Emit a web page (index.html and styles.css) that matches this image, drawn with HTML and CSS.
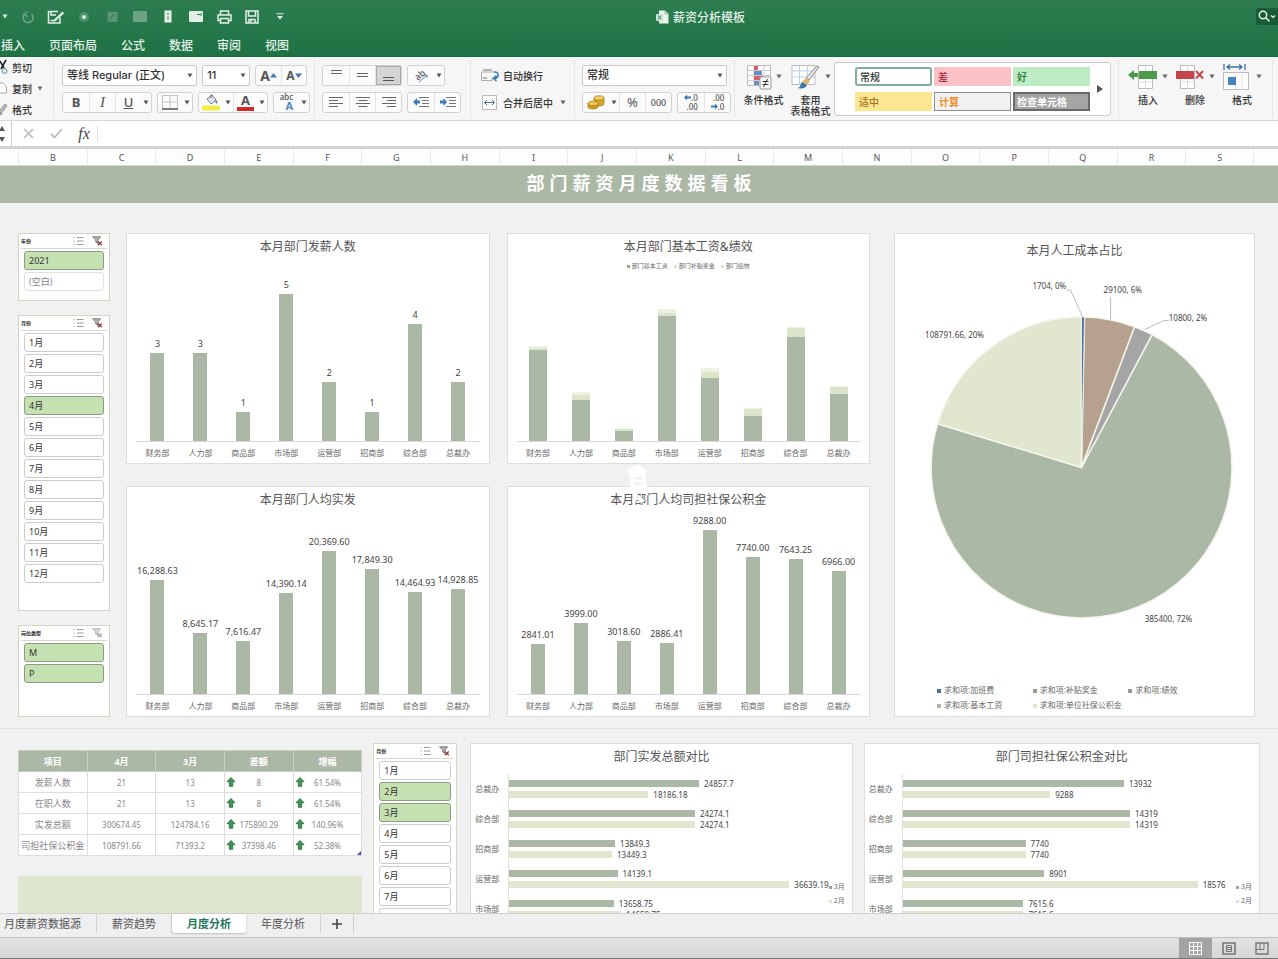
FILE: index.html
```html
<!DOCTYPE html>
<html lang="zh-CN">
<head>
<meta charset="utf-8">
<title>薪资分析模板</title>
<link rel="stylesheet" href="styles.css">
</head>
<body>
<svg class="defs" aria-hidden="true">
  <symbol id="caret" viewBox="0 0 6 5"><path d="M.5 .5h5L3 4.5z" fill="currentColor"/></symbol>
  <symbol id="multi" viewBox="0 0 11 10"><g fill="none" stroke="#999" stroke-width="1"><path d="M4 1.5h6.500M4 5h6.500M4 8.500h6.500"/><path d="M.5 1.500h1.500M.5 5h1.500M.5 8.500h1.500" stroke="#bbb"/></g></symbol>
  <symbol id="clear" viewBox="0 0 11 10"><path d="M.5 .8h8L6 4v3.500L3.800 6V4z" fill="#b9b0ae" stroke="#777" stroke-width=".9"/><path d="M5.800 5.500l4 3.800m0-3.800l-4 3.800" stroke="#8d3f3a" stroke-width="1.400"/></symbol>
  <symbol id="clear-off" viewBox="0 0 11 10"><path d="M.5 .8h8L6 4v3.500L3.800 6V4z" fill="#ddd" stroke="#aaa" stroke-width=".9"/><path d="M5.800 5.500l4 3.800m0-3.800l-4 3.800" stroke="#aaa" stroke-width="1.200"/></symbol>
  <symbol id="up" viewBox="0 0 10 10"><path d="M5 .5l4 4.200H6.700V9.300H3.300V4.700H1z" fill="#3f9457" stroke="#23693a" stroke-width=".8"/></symbol>
</svg>
<header class="titlebar">
  <div class="top-row">
    <div class="qat">
      <button class="qat-caret" aria-label="更多"><svg width="6" height="5"><use href="#caret"/></svg></button>
      <button class="dim" aria-label="重做"><svg width="14" height="14" viewBox="0 0 14 14" fill="none" stroke="currentColor" stroke-width="1.600"><path d="M3.500 4.200A5 5 0 1 0 10.500 4"/><path d="M6.500 1.500L3 4.500l3.800 2"/></svg></button>
      <button aria-label="编辑"><svg width="18" height="14" viewBox="0 0 18 14" fill="none" stroke="currentColor" stroke-width="1.500"><path d="M13 7.500V13H1.500V1.500H11M4 1.500V5h5"/><path d="M3.500 10.500h4"/><path d="M7.500 9.500L15.500 2l1.200 1.300-8 7.300-2 .6z" fill="currentColor" stroke-width=".8"/></svg></button>
      <button class="dim" aria-label="录制"><svg width="12" height="12" viewBox="0 0 12 12"><circle cx="6" cy="6" r="5" fill="currentColor" opacity=".6"/><circle cx="6" cy="6" r="2" fill="#dff0e4"/></svg></button>
      <button class="dim" aria-label="形状"><svg width="11" height="12" viewBox="0 0 11 12"><rect x=".5" y="1" width="10" height="10" rx="1" fill="currentColor" opacity=".7"/><path d="M3 8l4-5" stroke="#2b7a4e"/></svg></button>
      <button class="dim" aria-label="图片"><svg width="14" height="12" viewBox="0 0 14 12"><rect width="14" height="11" rx="1" fill="currentColor"/></svg></button>
      <button aria-label="纵向"><svg width="8" height="13" viewBox="0 0 8 13"><rect x=".5" y=".5" width="7" height="12" fill="currentColor"/><path d="M4 3v2M4 6.500v3" stroke="#2b7a4e"/></svg></button>
      <button aria-label="横向"><svg width="14" height="11" viewBox="0 0 14 11"><rect width="14" height="11" rx="1" fill="currentColor"/><path d="M8 3.500h3M12 2v3" stroke="#2b7a4e"/></svg></button>
      <button aria-label="打印"><svg width="15" height="14" viewBox="0 0 15 14" fill="none" stroke="currentColor" stroke-width="1.500"><path d="M3.500 5V1h8v4M3 10.500H1V5h13v5.500h-2"/><path d="M3.500 8.500h8V13h-8z"/></svg></button>
      <button aria-label="保存"><svg width="14" height="14" viewBox="0 0 14 14" fill="none" stroke="currentColor" stroke-width="1.500"><path d="M1 1h12v12H1z"/><path d="M3.500 1v5h7V1"/><path d="M4 13V9.500h6V13M6 10v2"/></svg></button>
      <button aria-label="自定义"><svg width="8" height="7" viewBox="0 0 8 7"><path d="M.5 .8h7" stroke="currentColor"/><path d="M1 3h6L4 6.500z" fill="currentColor"/></svg></button>
    </div>
    <div class="doc-title">
      <svg width="13" height="14" viewBox="0 0 13 14"><path d="M3 .5h6L12.500 4v9.500H3z" fill="#e8f3eb"/><path d="M9 .5V4h3.500" fill="none" stroke="#8fb79e"/><rect y="4" width="7" height="7" rx="1" fill="#cfe3d6"/><path d="M2 5.500l3 4M5 5.500l-3 4" stroke="#3b8059"/></svg>
      <span>薪资分析模板</span>
    </div>
    <button class="search" aria-label="搜索"><svg width="18" height="13" viewBox="0 0 18 13" fill="none" stroke="currentColor" stroke-width="1.500"><circle cx="5" cy="5" r="3.700"/><path d="M7.800 7.800l3.700 3.700"/><path d="M13 5.500l2 2 2-2" stroke-width="1.200"/></svg></button>
  </div>
  <nav class="menu">
    <a href="#">插入</a><a href="#">页面布局</a><a href="#">公式</a><a href="#">数据</a><a href="#">审阅</a><a href="#">视图</a>
  </nav>
</header>

<section class="ribbon">
  <div class="group clipboard">
    <button><svg width="8" height="15" viewBox="0 0 8 15"><path d="M6 0L1 9M0 1l4 7" stroke="#222" stroke-width="1.600"/><circle cx="4.500" cy="11" r="2.300" fill="none" stroke="#7fa6b6" stroke-width="1.300"/></svg>剪切</button>
    <button><svg width="8" height="15" viewBox="0 0 8 15"><path d="M0 2h3l3.500 3.500V12H0" fill="#fff" stroke="#aaa"/></svg>复制<svg class="caret" width="6" height="5"><use href="#caret"/></svg></button>
    <button><svg width="8" height="15" viewBox="0 0 8 15"><path d="M0 8l5-6 2 1.500-4 6z" fill="#bbb" stroke="#888" stroke-width=".8"/><path d="M0 9l3 2-3 3z" fill="#999"/></svg>格式</button>
  </div>
  <div class="group font-group">
    <div class="row">
      <span class="pick pick-font"><select aria-label="字体"><option>等线 Regular (正文)</option></select><svg width="6" height="5"><use href="#caret"/></svg></span>
      <span class="pick pick-size"><select aria-label="字号"><option>11</option></select><svg width="6" height="5"><use href="#caret"/></svg></span>
      <span class="seg end">
        <button aria-label="增大字号"><b class="big-a">A</b><svg width="7" height="5" viewBox="0 0 7 5"><path d="M0 4.500h7L3.500 0z" fill="#4a78b0"/></svg></button>
        <button aria-label="减小字号"><b class="small-a">A</b><svg width="7" height="5" viewBox="0 0 7 5"><path d="M0 .5h7L3.500 5z" fill="#4a6fb0"/></svg></button>
      </span>
    </div>
    <div class="row">
      <span class="seg biu">
        <button><b>B</b></button><button><i class="serif">I</i></button><button><u>U</u></button><button class="drop" aria-label="下划线选项"><svg width="6" height="5"><use href="#caret"/></svg></button>
      </span>
      <span class="seg">
        <button aria-label="边框"><svg width="16" height="16" viewBox="0 0 16 16" fill="none" stroke="#c4c4c4"><path d="M.5 1v13M8 1v13M15.500 1v13M.5 1.500h15M.5 8h15"/><path d="M0 15h16" stroke="#444" stroke-width="1.400"/></svg></button><button class="drop" aria-label="边框选项"><svg width="6" height="5"><use href="#caret"/></svg></button>
      </span>
      <span class="seg">
        <button aria-label="填充颜色"><svg width="18" height="18" viewBox="0 0 18 18"><path d="M5 6l5-4 4 5-5 4z" fill="#dfe9f3" stroke="#778" /><path d="M9 5V1.500" stroke="#667"/><path d="M14 7c2 2 1.500 3.500.5 3.500S13 9 14 7z" fill="#3c76b5"/><rect y="12.500" width="18" height="5" rx="1.500" fill="#f1ec46"/></svg></button><button class="drop" aria-label="填充选项"><svg width="6" height="5"><use href="#caret"/></svg></button><button aria-label="字体颜色"><span class="font-color">A</span></button><button class="drop" aria-label="颜色选项"><svg width="6" height="5"><use href="#caret"/></svg></button>
      </span>
      <span class="seg end">
        <button aria-label="拼音"><span class="abc"><span>abc</span><b>A</b></span></button><button class="drop" aria-label="拼音选项"><svg width="6" height="5"><use href="#caret"/></svg></button>
      </span>
    </div>
  </div>
  <div class="group align-group">
    <div class="row">
      <span class="seg three">
        <button aria-label="顶端对齐"><svg width="13" height="14" viewBox="0 0 13 14" stroke="#666"><path d="M1 2.500h11M1 5.500h11"/></svg></button><button aria-label="垂直居中"><svg width="13" height="14" viewBox="0 0 13 14" stroke="#666"><path d="M1 5.500h11M1 8.500h11"/></svg></button><button class="on" aria-label="底端对齐"><svg width="13" height="14" viewBox="0 0 13 14" stroke="#555"><path d="M1 9.500h11M1 12.500h11"/></svg></button>
      </span>
      <span class="seg">
        <button aria-label="方向"><svg width="16" height="16" viewBox="0 0 16 16"><text x="2" y="12" font-size="9" transform="rotate(-40 6 9)">ab</text><path d="M6 15L14 8m0 3V8h-3" fill="none" stroke="#5b86b8"/></svg></button><button class="drop" aria-label="方向选项"><svg width="6" height="5"><use href="#caret"/></svg></button>
      </span>
    </div>
    <div class="row">
      <span class="seg three">
        <button aria-label="左对齐"><svg width="14" height="12" viewBox="0 0 14 12" stroke="#666"><path d="M0 1.500h14M0 4.500h9M0 7.500h14M0 10.500h9"/></svg></button><button aria-label="居中"><svg width="14" height="12" viewBox="0 0 14 12" stroke="#666"><path d="M0 1.500h14M2.500 4.500h9M0 7.500h14M2.500 10.500h9"/></svg></button><button aria-label="右对齐"><svg width="14" height="12" viewBox="0 0 14 12" stroke="#666"><path d="M0 1.500h14M5 4.500h9M0 7.500h14M5 10.500h9"/></svg></button>
      </span>
      <span class="seg two">
        <button aria-label="减少缩进"><svg width="16" height="12" viewBox="0 0 16 12"><path d="M0 6l4-4v2.500h3v3H4V10z" fill="#3d78b6"/><path d="M6 1.500h10M9 4.500h7M9 7.500h7M6 10.500h10" stroke="#777"/></svg></button><button aria-label="增加缩进"><svg width="16" height="12" viewBox="0 0 16 12"><path d="M7 6L3.500 2v2.500H0v3h3.500V10z" fill="#3d78b6"/><path d="M6 1.500h10M9 4.500h7M9 7.500h7M6 10.500h10" stroke="#777"/></svg></button>
      </span>
    </div>
  </div>
  <div class="group wrap-group">
    <button><svg width="19" height="13" viewBox="0 0 19 13" fill="none"><path d="M.5 3v8.500H11V8M.5 3H13" stroke="#aaa"/><path d="M2 1h9M2 9h4" stroke="#777"/><path d="M13 3c5-1 6 6 0 6.500m2.500-3L12.500 9.500l3 2.500" stroke="#3d78b6" stroke-width="1.500"/></svg>自动换行</button>
    <button><svg width="19" height="15" viewBox="0 0 19 15" fill="none"><rect x="1.500" y=".5" width="14" height="14" fill="#fff" stroke="#bbb"/><path d="M3.500 7.500h10M6 5L3.500 7.500 6 10M11 5l2.500 2.500L11 10" stroke="#3d6fa6"/></svg>合并后居中<svg class="caret" width="6" height="5"><use href="#caret"/></svg></button>
  </div>
  <div class="group number-group">
    <div class="row"><span class="pick pick-number"><select aria-label="数字格式"><option>常规</option></select><svg width="6" height="5"><use href="#caret"/></svg></span></div>
    <div class="row">
      <span class="seg">
        <button aria-label="货币"><svg width="19" height="15" viewBox="0 0 19 15" stroke="#9a7416" stroke-width=".7"><path d="M7 3v6c0 2.500 10 2.500 10 0V3" fill="#d9a52b"/><ellipse cx="12" cy="3" rx="5" ry="2.200" fill="#f3cf63"/><path d="M1 8v4c0 2.500 10 2.500 10 0V8" fill="#d49c22"/><ellipse cx="6" cy="8.500" rx="5" ry="2.200" fill="#f0c550"/></svg></button><button class="drop" aria-label="货币选项"><svg width="6" height="5"><use href="#caret"/></svg></button><button class="pct">%</button><button class="thousand">000</button>
      </span>
      <span class="seg two end">
        <button aria-label="增加小数位"><span class="dec"><span><svg width="7" height="7" viewBox="0 0 7 7"><path d="M0 3.500L3 .5v2h4v2H3v2z" fill="#3d78b6"/></svg>.0</span><span>.00</span></span></button><button aria-label="减少小数位"><span class="dec"><span>.00</span><span><svg width="7" height="7" viewBox="0 0 7 7"><path d="M7 3.500L4 .5v2H0v2h4v2z" fill="#3d78b6"/></svg>.0</span></span></button>
      </span>
    </div>
  </div>
  <div class="group format-group">
    <button class="tall"><span class="ico"><svg width="26" height="26" viewBox="0 0 26 26"><path d="M1.500 1.500h23v20h-23z" fill="#fff" stroke="#bbb"/><path d="M1.500 6.500h23M1.500 11.500h23M1.500 16.500h23M8 1.500v20M18 1.500v20" stroke="#ccc"/><path d="M8 2h4v4H8zM8 12h9v4H8z" fill="#d9606b"/><path d="M8 7h8v4H8zM8 17h5v4H8z" fill="#6591c7"/><rect x="14" y="13" width="11" height="12" rx="1" fill="#fff" stroke="#999"/><path d="M16.500 17.500h6M16.500 20.500h6M21.500 15l-4 8" stroke="#333"/></svg><svg class="caret" width="6" height="5"><use href="#caret"/></svg></span><span>条件格式</span></button>
    <button class="tall"><span class="ico"><svg width="30" height="26" viewBox="0 0 30 26"><path d="M1 1.500h23v19H1z" fill="#fff" stroke="#bbb"/><path d="M1 7h23M1 13h23M8.500 1.500v19M16.500 1.500v19" stroke="#b9d2e6"/><path d="M28 3L18 16l-3-2L26 2z" fill="#e8e8e8" stroke="#888"/><path d="M15 14l4 3-3 4-5-3z" fill="#e4b168"/><path d="M11 18l5 3c-2 4-6 4-9 3 3-1 2-4 4-6z" fill="#3a76a9"/></svg><svg class="caret" width="6" height="5"><use href="#caret"/></svg></span><span>套用<br>表格格式</span></button>
  </div>
  <div class="gallery">
    <div class="styles">
      <button class="st normal">常规</button><button class="st bad">差</button><button class="st good">好</button>
      <button class="st neutral">适中</button><button class="st calc">计算</button><button class="st check">检查单元格</button>
    </div>
    <button class="more" aria-label="更多样式"><svg width="6" height="8" viewBox="0 0 6 8"><path d="M0 0v8l6-4z" fill="#555"/></svg></button>
  </div>
  <div class="group cells-group">
    <button class="tall"><span class="ico"><svg width="30" height="26" viewBox="0 0 30 26"><path d="M10.500 1.500h14v23h-14z" fill="#fff" stroke="#bbb"/><path d="M17.500 1.500v23M10.500 18h14" stroke="#ddd"/><rect x="11" y="7" width="18" height="8" fill="#4c9a4b"/><path d="M0 11l6-5v3h4v4H6v3z" fill="#4c9a4b"/></svg><svg class="caret" width="6" height="5"><use href="#caret"/></svg></span><span>插入</span></button>
    <button class="tall"><span class="ico"><svg width="30" height="26" viewBox="0 0 30 26"><path d="M5.500 1.500h14v23h-14z" fill="#fff" stroke="#bbb"/><path d="M12.500 1.500v23M5.500 18h14" stroke="#ddd"/><rect x="1" y="7" width="18" height="8" fill="#c5464a"/><path d="M21 7l7 7.500m0-7.500l-7 7.500" stroke="#c5464a" stroke-width="2"/></svg><svg class="caret" width="6" height="5"><use href="#caret"/></svg></span><span>删除</span></button>
    <button class="tall"><span class="ico"><svg width="30" height="26" viewBox="0 0 30 26"><path d="M1.500 8.500h25v17h-25z" fill="#fff" stroke="#bbb"/><path d="M13.500 8.500v17M20 8.500v17" stroke="#e2e2e2"/><rect x="6" y="13" width="8" height="8" fill="#4783c0"/><path d="M2 0v6M23 0v6M5 3h15M8 .5L5 3l3 2.500M17 .5L20 3l-3 2.500" fill="none" stroke="#3d6f9d" stroke-width="1.300"/></svg><svg class="caret" width="6" height="5"><use href="#caret"/></svg></span><span>格式</span></button>
  </div>
</section>

<section class="formula">
  <div class="spin"><svg width="5" height="16" viewBox="0 0 5 16" fill="#555"><path d="M-1 5h6L2 0zM-1 11h6L2 16z"/></svg></div>
  <button aria-label="取消"><svg width="11" height="11" viewBox="0 0 11 11" stroke="#bbb" stroke-width="1.600"><path d="M1 1l9 9M10 1l-9 9"/></svg></button>
  <button aria-label="确认"><svg width="13" height="11" viewBox="0 0 13 11" fill="none" stroke="#bbb" stroke-width="1.800"><path d="M1 6l3.500 3.500L12 1"/></svg></button>
  <button class="fx">fx</button>
  <input type="text" aria-label="编辑栏">
</section>

<div class="colhead">
  <span>B</span><span>C</span><span>D</span><span>E</span><span>F</span><span>G</span><span>H</span><span>I</span><span>J</span><span>K</span><span>L</span><span>M</span><span>N</span><span>O</span><span>P</span><span>Q</span><span>R</span><span>S</span>
</div>

<main class="sheet">
  <h1 class="banner">部 门 薪 资 月 度 数 据 看 板</h1>
  <section class="upper">
    <div class="slicers">
      <div class="slicer year">
        <div class="s-head"><b>年份</b><svg width="11" height="10"><use href="#multi"/></svg><svg width="11" height="10"><use href="#clear"/></svg></div>
        <button class="sel">2021</button><button class="empty">(空白)</button>
      </div>
      <div class="slicer months">
        <div class="s-head"><b>月份</b><svg width="11" height="10"><use href="#multi"/></svg><svg width="11" height="10"><use href="#clear"/></svg></div>
        <button>1月</button><button>2月</button><button>3月</button><button class="sel">4月</button><button>5月</button><button>6月</button><button>7月</button><button>8月</button><button>9月</button><button>10月</button><button>11月</button><button>12月</button>
      </div>
      <div class="slicer kind">
        <div class="s-head"><b>岗位类型</b><svg width="11" height="10"><use href="#multi"/></svg><svg width="11" height="10"><use href="#clear-off"/></svg></div>
        <button class="sel">M</button><button class="sel">P</button>
      </div>
    </div>

    <div class="charts">
      <article class="card">
        <h2>本月部门发薪人数</h2>
        <div class="plot">
          <div><span>3</span><i style="height:48.600%"></i></div><div><span>3</span><i style="height:48.600%"></i></div><div><span>1</span><i style="height:16.200%"></i></div><div><span>5</span><i style="height:81%"></i></div><div><span>2</span><i style="height:32.400%"></i></div><div><span>1</span><i style="height:16.200%"></i></div><div><span>4</span><i style="height:64.800%"></i></div><div><span>2</span><i style="height:32.400%"></i></div>
        </div>
        <div class="cats"><span>财务部</span><span>人力部</span><span>商品部</span><span>市场部</span><span>运营部</span><span>招商部</span><span>综合部</span><span>总裁办</span></div>
      </article>
      <article class="card">
        <h2>本月部门基本工资&amp;绩效</h2>
        <div class="mini-legend"><span class="k1">部门基本工资</span><span class="k2">部门补贴奖金</span><span class="k3">部门绩效</span></div>
        <div class="plot stacked">
          <div><i class="c" style="height:1.200%"></i><i class="b" style="height:1%"></i><i style="height:55.400%"></i></div>
          <div><i class="c" style="height:1.800%"></i><i class="b" style="height:3%"></i><i style="height:24.700%"></i></div>
          <div><i class="c" style="height:.6%"></i><i class="b" style="height:1.200%"></i><i style="height:6%"></i></div>
          <div><i class="c" style="height:2.400%"></i><i class="b" style="height:1.800%"></i><i style="height:75.900%"></i></div>
          <div><i class="c" style="height:2.400%"></i><i class="b" style="height:3.600%"></i><i style="height:38%"></i></div>
          <div><i class="c" style="height:.6%"></i><i class="b" style="height:4.200%"></i><i style="height:15.100%"></i></div>
          <div><i class="c" style="height:.6%"></i><i class="b" style="height:5.400%"></i><i style="height:63.300%"></i></div>
          <div><i class="c" style="height:.6%"></i><i class="b" style="height:4.200%"></i><i style="height:28.300%"></i></div>
        </div>
        <div class="cats"><span>财务部</span><span>人力部</span><span>商品部</span><span>市场部</span><span>运营部</span><span>招商部</span><span>综合部</span><span>总裁办</span></div>
      </article>
      <article class="card">
        <h2>本月部门人均实发</h2>
        <div class="plot">
          <div><span>16,288.63</span><i style="height:63.200%"></i></div><div><span>8,645.17</span><i style="height:33.500%"></i></div><div><span>7,616.47</span><i style="height:29.500%"></i></div><div><span>14,390.14</span><i style="height:55.800%"></i></div><div><span>20,369.60</span><i style="height:79%"></i></div><div><span>17,849.30</span><i style="height:69.200%"></i></div><div><span>14,464.93</span><i style="height:56.100%"></i></div><div><span>14,928.85</span><i style="height:57.900%"></i></div>
        </div>
        <div class="cats"><span>财务部</span><span>人力部</span><span>商品部</span><span>市场部</span><span>运营部</span><span>招商部</span><span>综合部</span><span>总裁办</span></div>
      </article>
      <article class="card">
        <h2>本月部门人均司担社保公积金</h2>
        <div class="plot">
          <div><span>2841.01</span><i style="height:27.700%"></i></div><div><span>3999.00</span><i style="height:39%"></i></div><div><span>3018.60</span><i style="height:29.500%"></i></div><div><span>2886.41</span><i style="height:28.200%"></i></div><div><span>9288.00</span><i style="height:90.700%"></i></div><div><span>7740.00</span><i style="height:75.500%"></i></div><div><span>7643.25</span><i style="height:74.600%"></i></div><div><span>6966.00</span><i style="height:68%"></i></div>
        </div>
        <div class="cats"><span>财务部</span><span>人力部</span><span>商品部</span><span>市场部</span><span>运营部</span><span>招商部</span><span>综合部</span><span>总裁办</span></div>
      </article>
      <svg class="mark" width="22" height="44" viewBox="0 0 22 44" fill="none" stroke="#fff" aria-hidden="true"><path d="M1 10V6q1-4 5-3 6-4 9 1 5 0 4 6z" fill="#fff" stroke="none"/><path d="M3 12h16M3 17h16M3 22h17M5 10v12M17 10v12" stroke-width="3"/><path d="M10 14h4M9 19.500h5" stroke="#f1f1f1" stroke-width="2"/><path d="M9 29l-2 9M11 33l5 5" stroke-width="4"/></svg>
    </div>

    <article class="card pie-card">
      <h2>本月人工成本占比</h2>
      <svg class="pie" viewBox="0 0 358 412">
        <g stroke="#f3f6ec" stroke-width="1.500" stroke-linejoin="round">
          <path d="M186 200.500L256.300 68A150 150 0 1 1 42.500 156.900z" fill="#abb8a6"/>
          <path d="M186 200.500L42.500 156.900A150 150 0 0 1 186 50.500z" fill="#e1e6cf"/>
          <path d="M186 200.500L189 50.500A150 150 0 0 1 239 60.200z" fill="#b5a18d"/>
          <path d="M186 200.500L239 60.200A150 150 0 0 1 256.300 68z" fill="#a5a5a5"/>
          <path d="M186 200.500L186 50.500A150 150 0 0 1 189 50.500z" fill="#5573a3" stroke-width=".8"/>
        </g>
        <path d="M171 23.500h4L187 50M215 31v22M249 63l19-9h5" fill="none" stroke="#aaa" stroke-width=".8"/>
        <text x="137" y="23">1704, 0%</text><text x="208" y="27">29100, 6%</text><text x="273" y="54">10800, 2%</text><text x="30" y="71">108791.66, 20%</text><text x="249" y="355">385400, 72%</text>
      </svg>
      <ul class="pie-legend"><li class="p1">求和项:加班费</li><li class="p2">求和项:补贴奖金</li><li class="p3">求和项:绩效</li><li class="p4">求和项:基本工资</li><li class="p5">求和项:单位社保公积金</li></ul>
    </article>
  </section>

  <section class="lower">
    <div class="summary">
      <table>
        <thead><tr><th>项目</th><th>4月</th><th>3月</th><th>差额</th><th>增幅</th></tr></thead>
        <tbody>
          <tr><td class="name">发薪人数</td><td>21</td><td>13</td><td><svg width="10" height="10"><use href="#up"/></svg>8</td><td><svg width="10" height="10"><use href="#up"/></svg>61.54%</td></tr>
          <tr><td class="name">在职人数</td><td>21</td><td>13</td><td><svg width="10" height="10"><use href="#up"/></svg>8</td><td><svg width="10" height="10"><use href="#up"/></svg>61.54%</td></tr>
          <tr><td class="name">实发总额</td><td>300674.45</td><td>124784.16</td><td><svg width="10" height="10"><use href="#up"/></svg>175890.29</td><td><svg width="10" height="10"><use href="#up"/></svg>140.96%</td></tr>
          <tr><td class="name">司担社保公积金</td><td>108791.66</td><td>71393.2</td><td><svg width="10" height="10"><use href="#up"/></svg>37398.46</td><td class="last"><svg width="10" height="10"><use href="#up"/></svg>52.38%</td></tr>
        </tbody>
      </table>
      <div class="block"></div>
    </div>
    <div class="slicer compare">
      <div class="s-head"><b>月份</b><svg width="11" height="10"><use href="#multi"/></svg><svg width="11" height="10"><use href="#clear"/></svg></div>
      <button>1月</button><button class="sel">2月</button><button class="sel">3月</button><button>4月</button><button>5月</button><button>6月</button><button>7月</button><button aria-label="8月"></button>
    </div>
    <article class="card hcard">
      <h2>部门实发总额对比</h2>
      <div class="hplot">
        <span>总裁办</span><div><p><i style="width:55.400%"></i>24857.7</p><p><i class="b" style="width:40.600%"></i>18186.18</p></div>
        <span>综合部</span><div><p><i style="width:54.200%"></i>24274.1</p><p><i class="b" style="width:54.200%"></i>24274.1</p></div>
        <span>招商部</span><div><p><i style="width:30.900%"></i>13849.3</p><p><i class="b" style="width:30%"></i>13449.3</p></div>
        <span>运营部</span><div><p><i style="width:31.600%"></i>14139.1</p><p><i class="b" style="width:81.800%"></i>36639.19</p></div>
        <span>市场部</span><div><p><i style="width:30.500%"></i>13658.75</p><p><i class="b" style="width:32.700%"></i>14658.75</p></div>
      </div>
      <div class="side-legend"><span class="k1">3月</span><span class="k2">2月</span></div>
    </article>
    <article class="card hcard">
      <h2>部门司担社保公积金对比</h2>
      <div class="hplot">
        <span>总裁办</span><div><p><i style="width:62.100%"></i>13932</p><p><i class="b" style="width:41.400%"></i>9288</p></div>
        <span>综合部</span><div><p><i style="width:63.800%"></i>14319</p><p><i class="b" style="width:63.800%"></i>14319</p></div>
        <span>招商部</span><div><p><i style="width:34.500%"></i>7740</p><p><i class="b" style="width:34.500%"></i>7740</p></div>
        <span>运营部</span><div><p><i style="width:39.700%"></i>8901</p><p><i class="b" style="width:82.800%"></i>18576</p></div>
        <span>市场部</span><div><p><i style="width:33.900%"></i>7615.6</p><p><i class="b" style="width:33.900%"></i>7615.6</p></div>
      </div>
      <div class="side-legend"><span class="k1">3月</span><span class="k2">2月</span></div>
    </article>
  </section>
</main>

<nav class="tabs">
  <a href="#">月度薪资数据源</a><a href="#">薪资趋势</a><a href="#" class="active">月度分析</a><a href="#">年度分析</a><button aria-label="新建工作表"><svg width="10" height="10" viewBox="0 0 10 10" stroke="#444" stroke-width="1.600"><path d="M5 0v10M0 5h10"/></svg></button>
</nav>
<footer class="status">
  <button class="on" aria-label="普通视图"><svg width="13" height="13" viewBox="0 0 13 13" fill="none" stroke="#fff"><path d="M.5 .5h12v12H.5zM4.500 .5v12M8.500 .5v12M.5 4.500h12M.5 8.500h12"/></svg></button>
  <button aria-label="页面布局"><svg width="14" height="13" viewBox="0 0 14 13" fill="none" stroke="#777"><path d="M1 1h12v11H1z" stroke-width="1.600"/><path d="M4.500 3.500h5v6h-5zM4.500 5.500h5M4.500 7.500h5"/></svg></button>
  <button aria-label="分页预览"><svg width="14" height="13" viewBox="0 0 14 13" fill="none" stroke="#777"><path d="M1 1h12v11H1z" stroke-width="1.400"/><path d="M5 1v6M9 1v6M1 7.500h8"/></svg></button>
</footer>
</body>
</html>
```
FILE: styles.css
```css
* { box-sizing: border-box; }
body {
  margin: 0;
  height: 100vh;
  display: flex;
  flex-direction: column;
  overflow: hidden;
  background: #f1f1f1;
  color: #333;
  font-family: "Noto Sans", "Noto Sans CJK SC", sans-serif;
  font-size: 10px;
}
button, select, input { font: inherit; color: inherit; }
button {
  border: 0;
  padding: 0;
  background: none;
  display: inline-flex;
  align-items: center;
  justify-content: center;
}
a { color: inherit; text-decoration: none; }
svg { flex: none; overflow: visible; }
.defs { position: absolute; width: 0; height: 0; }

/* Title bar */
.titlebar {
  flex: none;
  background: linear-gradient(#2d7d51, #1e7244);
  color: #e3f0e7;
  border-bottom: 1px solid #1d6b3f;
}
.top-row {
  height: 33px;
  display: grid;
  grid-template-columns: 656fr auto 533fr;
  align-items: center;
}
.qat { display: flex; }
.qat button { width: 28px; height: 20px; }
.qat .qat-caret { width: 14px; padding-right: 4px; }
.qat .dim { color: #6ca384; }
.doc-title { display: flex; align-items: center; gap: 4px; font-size: 12px; font-weight: 500; }
.search {
  justify-self: end;
  width: 22px;
  height: 17px;
  background: #175c36;
  border-radius: 3px 0 0 3px;
  overflow: hidden;
}
.menu {
  height: 23px;
  padding-left: 1px;
  display: flex;
  align-items: center;
  gap: 24px;
  font-size: 12px;
  font-weight: 500;
}

/* Ribbon */
.ribbon {
  flex: none;
  height: 64px;
  display: flex;
  align-items: center;
  background: #f6f6f6;
  border-bottom: 1px solid #d6d6d6;
  font-weight: 500;
}
.group {
  flex: none;
  height: 58px;
  display: flex;
  flex-direction: column;
  justify-content: center;
  gap: 6px;
  border-right: 1px solid #e6e6e6;
  padding: 0 7px;
}
.row { display: flex; gap: 5px; }
.row .end { margin-left: auto; }
.caret { color: #666; margin-left: 8px; }
.clipboard { width: 54px; padding: 0; gap: 6px; align-items: flex-start; }
.clipboard button { height: 15px; gap: 4px; white-space: nowrap; }
.clipboard .caret { margin-left: 1px; }
.font-group { width: 261px; padding-left: 8px; }
.align-group { width: 156px; }
.wrap-group { width: 104px; align-items: flex-start; padding-left: 10px; padding-right: 0; }
.wrap-group button { height: 21px; gap: 3px; white-space: nowrap; }
.wrap-group .caret { margin-left: 4px; }
.number-group { width: 160px; }
.pick { position: relative; display: block; height: 21px; }
.pick select {
  appearance: none;
  width: 100%;
  height: 100%;
  padding: 0 4px;
  border: 1px solid #c9c9c9;
  border-radius: 2px;
  background: #fff;
  font-family: Inter, "Noto Sans CJK SC", sans-serif;
  font-size: 11px;
  font-weight: 500;
}
.pick svg { position: absolute; right: 4px; top: 8px; color: #555; }
.pick-font { width: 136px; }
.pick-size { width: 48px; }
.pick-number { width: 100%; }
.seg {
  height: 21px;
  display: flex;
  border: 1px solid #d2d2d2;
  border-radius: 3px;
  background: #fbfbfb;
  color: #555;
}
.seg button { width: 26px; font-size: 13px; line-height: 19px; }
.seg button + button:not(.drop) { border-left: 1px solid #e4e4e4; }
.seg .drop { width: 10px; }
.seg .on { background: #d4d4d4; box-shadow: inset 0 0 0 1px #aaa; }
.seg text { fill: #555; }
.font-group .seg:not(.biu):not(.end) button:not(.drop) { width: 24px; }
.font-group .seg.end button:not(.drop) { width: 25px; }
.big-a { font-size: 14px; }
.small-a { font-size: 12px; }
.serif { font-family: "Liberation Serif", serif; font-size: 15px; }
.font-color { font-weight: 700; line-height: 13px; border-bottom: 4px solid #d3262b; padding: 0 4px; }
.abc { display: flex; flex-direction: column; font-size: 8px; line-height: 7px; }
.abc b { font-size: 11px; line-height: 11px; color: #4a88c4; text-align: right; }
.dec { display: flex; flex-direction: column; align-items: flex-end; font-size: 8px; line-height: 9px; }
.seg .pct { font-size: 13px; font-weight: 400; }
.seg .thousand { font-size: 9px; }
.tall {
  flex-direction: column;
  justify-content: flex-start;
  height: 58px;
  width: 46px;
  padding-top: 4px;
  line-height: 11px;
  gap: 5px;
}
.tall > span { white-space: nowrap; }
.ico { display: flex; align-items: center; }
.ico .caret { margin-left: 4px; }
.format-group, .cells-group { flex-direction: row; align-items: center; gap: 0; }
.format-group { width: 99px; border: 0; padding: 0 0 0 5px; }
.format-group .tall { width: 47px; }
.cells-group {
  width: 155px;
  justify-content: flex-start;
  padding: 0 0 0 6px;
  gap: 1px;
  margin-left: 7px;
  margin-right: 5px;
  border-left: 1px solid #e6e6e6;
}
.gallery {
  flex: 1;
  height: 54px;
  display: flex;
  align-items: center;
  padding-left: 20px;
  border: 1px solid #ccc;
  border-radius: 3px;
  background: #fff;
}
.styles { flex: 1; display: grid; grid-template-columns: repeat(3, 1fr); gap: 6px 2px; }
.st { height: 19px; justify-content: flex-start; padding-left: 4px; }
.normal { border: 2px solid #82ad9b; border-radius: 3px; padding-left: 3px; }
.bad { background: #fdc2c8; color: #b2283a; }
.good { background: #bdecc2; color: #23783a; }
.neutral { background: #fde692; color: #9f7418; }
.calc { background: #f2f2f2; border: 1px solid #8c8c8c; color: #ec8a24; font-weight: 700; }
.check { background: #a5a5a5; border: 2px solid #6a6a6a; color: #fff; font-weight: 700; padding-left: 2px; }
.more { width: 20px; height: 30px; }

/* Formula bar */
.formula {
  flex: none;
  height: 28px;
  display: flex;
  align-items: center;
  background: #fff;
  border-bottom: 3px solid #d2d2d2;
}
.spin { width: 12px; height: 25px; display: flex; align-items: center; border-right: 1px solid #ccc; }
.formula button { width: 27px; height: 24px; margin-left: 1px; }
.formula .spin + button { margin-left: 3px; }
.formula .fx { font: italic 16px "Liberation Serif", serif; width: 26px; color: #444; }
.formula input { flex: 1; min-width: 0; height: 16px; border: 0; border-left: 1px solid #e2e2e2; outline: 0; }
.colhead {
  flex: none;
  height: 17px;
  padding: 0 24px 0 18px;
  display: grid;
  grid-template-columns: repeat(18, 1fr);
  background: #fcfdfc;
  border-bottom: 1px solid #cfd8cb;
  font-size: 9px;
  line-height: 17px;
  text-align: center;
  color: #555;
}
.colhead span { border-left: 1px solid #e6ebe6; }
.colhead span:last-child { border-right: 1px solid #e6ebe6; }

/* Sheet */
.sheet { flex: 1; min-height: 0; overflow: hidden; }
.banner {
  margin: 0;
  background: #abb8a6;
  color: #fff;
  text-align: center;
  font: 700 18px/37px "Liberation Sans", "Noto Sans CJK SC", sans-serif;
}
.upper {
  display: grid;
  grid-template-columns: 92px 784fr 361fr;
  padding: 30px 23px 11px 18px;
  border-bottom: 1px solid #e2e2e2;
}
.slicers { display: flex; flex-direction: column; gap: 14px; }
.slicer {
  display: flex;
  flex-direction: column;
  gap: 2px;
  padding: 0 5px;
  background: #fff;
  border: 1px solid #cfd8c2;
}
.s-head {
  height: 15px;
  margin: 0 -3px;
  display: flex;
  align-items: center;
  gap: 8px;
  border-bottom: 1px solid #d5dacd;
  font-size: 5px;
  line-height: 10px;
  color: #222;
}
.s-head b { flex: 1; }
.s-head svg:last-child { margin-right: 4px; }
.slicer button {
  height: 19px;
  flex: none;
  justify-content: flex-start;
  padding-left: 4px;
  border: 1px solid #ccc;
  border-radius: 3px;
  background: #fff;
  font-size: 9px;
}
.slicer .sel { background: #c5e1b2; border-color: #8b9c83; }
.slicer .empty { color: #888; border-color: #e0e0e0; }
.year { padding-bottom: 9px; }
.months { padding-bottom: 27px; }
.kind { flex: 1; }

.charts {
  position: relative;
  display: grid;
  grid-template-columns: 1fr 1fr;
  align-content: start;
  gap: 22px 17px;
  padding: 0 24px 0 16px;
}
.card { background: #fff; border: 1px solid #dcdedc; min-width: 0; }
.card h2 {
  margin: 0;
  font-size: 12px;
  font-weight: 400;
  line-height: 26px;
  text-align: center;
  color: #555;
}
.plot {
  height: 182px;
  margin: 0 9px;
  display: grid;
  grid-template-columns: repeat(8, 1fr);
  border-bottom: 1px solid #d8dcd6;
}
.plot div { display: flex; flex-direction: column; justify-content: flex-end; align-items: center; min-width: 0; }
.plot span { font-size: 9px; line-height: 18px; color: #444; }
.plot i { flex: none; width: 14px; background: #abb8a6; }
.stacked { height: 166px; }
.plot.stacked i { width: 18px; }
.plot .b { background: #dce5cc; }
.plot .c { background: #eef2e2; }
.cats {
  margin: 0 9px;
  display: grid;
  grid-template-columns: repeat(8, 1fr);
  font-size: 8px;
  line-height: 21px;
  text-align: center;
  color: #666;
}
.mini-legend { height: 16px; display: flex; justify-content: center; gap: 6px; font-size: 6px; line-height: 12px; color: #666; }
.mini-legend span::before, .side-legend span::before {
  content: "";
  display: inline-block;
  width: 3px;
  height: 3px;
  margin-right: 2px;
  vertical-align: middle;
  background: #dce5cc;
}
.mini-legend .k1::before, .side-legend .k1::before { background: #98a693; }
.mark { position: absolute; left: 66%; top: 231px; }

.pie-card { display: flex; flex-direction: column; }
.pie-card h2 { padding-top: 4px; }
.pie { flex: 1; min-height: 0; width: 100%; }
.pie text { font-size: 8px; fill: #444; }
.pie-legend {
  list-style: none;
  margin: 0;
  padding: 0 30px 4px 42px;
  display: grid;
  grid-template-columns: repeat(3, 1fr);
  font-size: 8px;
  line-height: 15px;
  color: #666;
  white-space: nowrap;
}
.pie-legend li::before { content: ""; display: inline-block; width: 4px; height: 4px; margin-right: 3px; vertical-align: middle; background: #abb8a6; }
.pie-legend .p1::before { background: #44709d; }
.pie-legend .p2::before { background: #a19c8e; }
.pie-legend .p3::before { background: #999; }
.pie-legend .p5::before { background: #e1e6cf; }

.lower {
  display: grid;
  grid-template-columns: 344fr 86fr 382fr 396fr;
  gap: 11px;
  padding: 14px 18px 0;
}
.summary { padding-top: 7px; }
.summary table { width: 100%; border-collapse: collapse; table-layout: fixed; background: #fff; }
.summary th { height: 21px; padding: 0; background: #abb8a6; color: #fff; border: 1px solid #c6cfc2; font-size: 9px; }
.summary td { position: relative; height: 21px; padding: 0; border: 1px solid #ddd; font-size: 8px; text-align: center; color: #888; }
.summary .name { font-size: 9px; white-space: nowrap; }
.summary td svg { position: absolute; left: 1px; top: 5px; }
.summary .last::after { content: ""; position: absolute; right: 0; bottom: 0; border: 2px solid #3f51a5; border-top-color: transparent; border-left-color: transparent; }
.block { height: 84px; margin-top: 20px; background: #dfe6ce; }
.compare { margin-right: 2px; }
.hcard { position: relative; }
.hplot {
  margin-top: 4px;
  display: grid;
  grid-template-columns: 37px 1fr;
  font-size: 8px;
  color: #444;
}
.hplot > span { line-height: 30px; padding-left: 4px; color: #666; }
.hplot > div { height: 30px; display: flex; flex-direction: column; justify-content: center; gap: 1px; border-left: 1px solid #dfe4d8; }
.hplot p { margin: 0; display: flex; align-items: center; gap: 5px; line-height: 10px; }
.hplot i { flex: none; height: 7px; background: #abb8a6; }
.hplot .b { background: #e1e6cf; }
.side-legend { position: absolute; right: 7px; top: 136px; display: grid; font-size: 7px; line-height: 14px; color: #666; }

/* Bottom bars */
.tabs {
  flex: none;
  height: 24px;
  display: flex;
  align-items: flex-start;
  background: #efefef;
  border-top: 1px solid #d0d0d0;
  font-size: 11px;
  color: #555;
}
.tabs a, .tabs button { height: 19px; line-height: 19px; padding: 0 15px; border-right: 1px solid #d4d4d4; }
.tabs a:first-child { padding-left: 4px; }
.tabs button { padding: 0 11px; height: 20px; }
.tabs .active { background: #fff; color: #23795a; font-weight: 700; border: 0; border-radius: 0 0 3px 3px; box-shadow: 0 1px 2px #bbb; }
.status {
  flex: none;
  height: 22px;
  display: flex;
  justify-content: flex-end;
  background: linear-gradient(#e2e2e2, #d6d6d6);
  border-top: 1px solid #bfbfbf;
  border-bottom: 1px solid #777;
}
.status button { width: 33px; }
.status .on { background: #a3a3a3; }
```
